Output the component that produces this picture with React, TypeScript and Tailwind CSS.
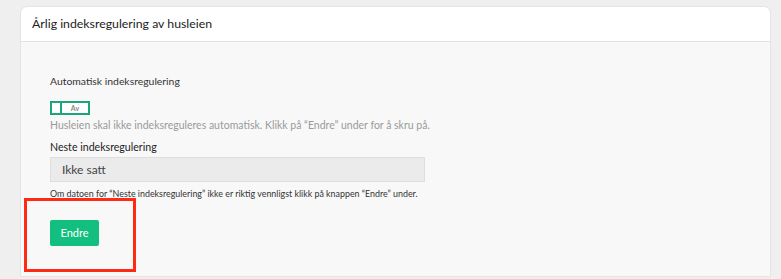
export default function App() {
  return (
    <div
      className="w-[781px] h-[279px] bg-[#efefef] pt-[6px] pl-[20px] pr-[10px] overflow-hidden"
      style={{ fontFamily: "Lato, 'Noto Sans', sans-serif" }}
    >
      <div className="rounded-t-[7px] border border-[#e2e4e6] bg-[#f8f8f8] h-[271px]">
        <div className="h-[35px] bg-white border-b border-[#dfe2e5] rounded-t-[7px] flex items-center pl-[11px]">
          <span className="text-[12.3px] text-[#222]">Årlig indeksregulering av husleien</span>
        </div>

        <div className="relative pl-[29px] pt-[32px]">
          <div className="text-[10.4px] text-[#333] leading-[14px]">Automatisk indeksregulering</div>

          <div className="mt-[13px] flex w-[40px] h-[14px] border-2 border-[#1ba57b] bg-white">
            <div className="w-[10px] border-r-2 border-[#1ba57b]" />
            <div className="flex-1 flex items-center justify-center text-[7px] font-bold text-[#888] leading-none">Av</div>
          </div>

          <div className="mt-[3px] text-[10.5px] text-[#9a9a9a] leading-[14px]">
            Husleien skal ikke indeksreguleres automatisk. Klikk på “Endre” under for å skru på.
          </div>

          <div className="mt-[8px] text-[10.6px] text-[#222] leading-[14px]">Neste indeksregulering</div>

          <div className="mt-[3px] w-[375px] h-[25px] bg-[#ebebeb] border border-[#dedede] flex items-center pl-[11px] text-[12px] text-[#444]">
            Ikke satt
          </div>

          <div className="mt-[6px] text-[8.9px] text-[#333] leading-[12px]">
            Om datoen for “Neste indeksregulering” ikke er riktig vennligst klikk på knappen “Endre” under.
          </div>

          <div className="absolute left-[3px] top-[156px] w-[112px] h-[74px] border-[3px] border-[#ff2a14]" />

          <button className="mt-[20px] w-[49px] h-[26px] bg-[#13bf7e] rounded-[2px] text-white text-[11px]">
            Endre
          </button>
        </div>
      </div>
    </div>
  );
}
